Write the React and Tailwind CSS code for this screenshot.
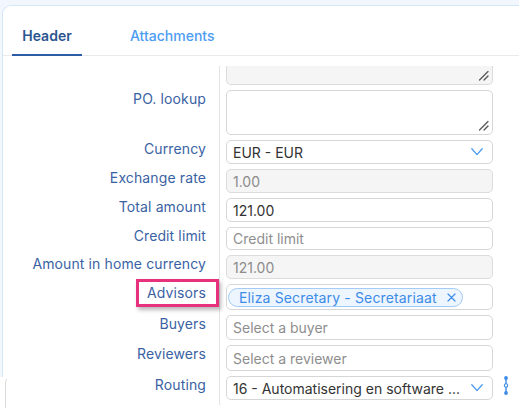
import React from "react";

function Chevron() {
  return (
    <svg width="12" height="8" viewBox="0 0 12 8" fill="none" className="shrink-0">
      <path d="M0.8 0.8 L6 6.6 L11.2 0.8" stroke="#4b9bf0" strokeWidth="1.3" strokeLinecap="round" strokeLinejoin="round" />
    </svg>
  );
}

function Grip() {
  return (
    <svg width="11" height="11" viewBox="0 0 11 11" className="absolute right-[3px] bottom-[3px]">
      <path d="M10 1.5 L1.5 10" stroke="#555" strokeWidth="1.2" strokeLinecap="round" />
      <path d="M10 6 L6 10" stroke="#555" strokeWidth="1.2" strokeLinecap="round" />
    </svg>
  );
}

function Row({ label, h, children, right, highlight }) {
  return (
    <div className="flex">
      <div className="relative w-[217px] shrink-0 border-r border-[#e3e3e3] pr-[13px] pb-[5px] flex justify-end items-start">
        {label && (
          <span className="text-[14px] leading-[18px] tracking-[0.12px] text-[#3a62a3] whitespace-nowrap">{label}</span>
        )}
        {highlight && (
          <div className="absolute right-0 top-[-5px] w-[83px] h-[28px] border-[3px] border-[#e8317c] shadow-[2px_3px_4px_rgba(0,0,0,0.28)]" />
        )}
      </div>
      <div className="pl-[6px] pb-[5px] flex items-center">
        <div className="w-[267px]" style={{ height: h }}>
          {children}
        </div>
        {right}
      </div>
    </div>
  );
}

const box = "w-full h-full rounded-[5px] border border-[#d6d6d6] flex items-center pl-[6px] pr-[9px] text-[14px] whitespace-nowrap overflow-hidden";

export default function App() {
  return (
    <div className="relative w-[519px] h-[408px] overflow-hidden bg-[#f2f7fd] font-['Inter',sans-serif]">
      <div className="ml-[2px] mt-[5px] h-[403px] rounded-tl-[9px] border-l border-t border-[#d5e6f8] bg-white">
        {/* Tabs */}
        <div className="flex h-[50px] border-b border-[#eaeaea] pl-[9px]">
          <div className="w-[70px] -mb-px border-b-2 border-[#2b5ca5] flex justify-center pt-[20px]">
            <span className="text-[14px] leading-[20px] font-semibold text-[#2d5590]">Header</span>
          </div>
          <div className="ml-[38px] px-[10px] flex justify-center pt-[20px]">
            <span className="text-[14px] leading-[20px] font-medium text-[#4c9cf1]">Attachments</span>
          </div>
        </div>

        {/* Form */}
        <div className="pt-[10px] flex flex-col">
          <Row h={19}>
            <div className="relative w-full h-full rounded-b-[5px] border border-t-0 border-[#dcdcdc] bg-[#f5f5f5]">
              <Grip />
            </div>
          </Row>
          <Row label="PO. lookup" h={45}>
            <div className="relative w-full h-full rounded-[5px] border border-[#d6d6d6] bg-white">
              <Grip />
            </div>
          </Row>
          <Row label="Currency" h={24}>
            <div className={box + " justify-between text-[#333]"}>
              <span>EUR - EUR</span>
              <Chevron />
            </div>
          </Row>
          <Row label="Exchange rate" h={24}>
            <div className={box + " bg-[#f5f5f5] border-[#dcdcdc] text-[#8c8c8c]"}>1.00</div>
          </Row>
          <Row label="Total amount" h={24}>
            <div className={box + " text-[#333]"}>121.00</div>
          </Row>
          <Row label="Credit limit" h={23}>
            <div className={box + " text-[#8e8e8e]"}>Credit limit</div>
          </Row>
          <Row label="Amount in home currency" h={24}>
            <div className={box + " bg-[#f5f5f5] border-[#dcdcdc] text-[#8c8c8c]"}>121.00</div>
          </Row>
          <Row label="Advisors" h={26} highlight>
            <div className="w-full h-full rounded-[5px] border border-[#d6d6d6] flex items-center pl-[1px]">
              <div className="h-[19px] rounded-full border border-[#a3cbf5] bg-[#edf5fe] flex items-center pl-[10px] pr-[6px] gap-[10px] text-[14px] tracking-[0.15px] text-[#3d8ce8] whitespace-nowrap">
                <span>Eliza Secretary - Secretariaat</span>
                <svg width="9" height="9" viewBox="0 0 9 9">
                  <path d="M1 1 L8 8 M8 1 L1 8" stroke="#3d8ce8" strokeWidth="1.2" strokeLinecap="round" />
                </svg>
              </div>
            </div>
          </Row>
          <Row label="Buyers" h={25}>
            <div className={box + " text-[#8e8e8e]"}>Select a buyer</div>
          </Row>
          <Row label="Reviewers" h={26}>
            <div className={box + " text-[#8e8e8e]"}>Select a reviewer</div>
          </Row>
          <Row
            label="Routing"
            h={24}
            right={
              <svg width="6" height="19" viewBox="0 0 6 19" className="ml-[10px] -mt-[6px]">
                <line x1="3" y1="2" x2="3" y2="17" stroke="#3d8ce8" strokeWidth="1.4" />
                <circle cx="3" cy="2" r="1.9" fill="#3d8ce8" />
                <circle cx="3" cy="17" r="1.9" fill="#3d8ce8" />
                <circle cx="3" cy="9.5" r="1.7" fill="white" stroke="#3d8ce8" strokeWidth="1.1" />
              </svg>
            }
          >
            <div className={box + " justify-between text-[#333] pr-[9px]"}>
              <span>16 - Automatisering en software ...</span>
              <Chevron />
            </div>
          </Row>
        </div>
      </div>
      <div className="absolute left-0 top-[377px] w-[10px] h-[40px] bg-white">
        <div className="absolute left-[5px] top-0 w-[10px] h-[40px] rounded-tl-[6px] border-l border-t border-l-[#dcdcdc] border-t-white" />
      </div>
    </div>
  );
}
